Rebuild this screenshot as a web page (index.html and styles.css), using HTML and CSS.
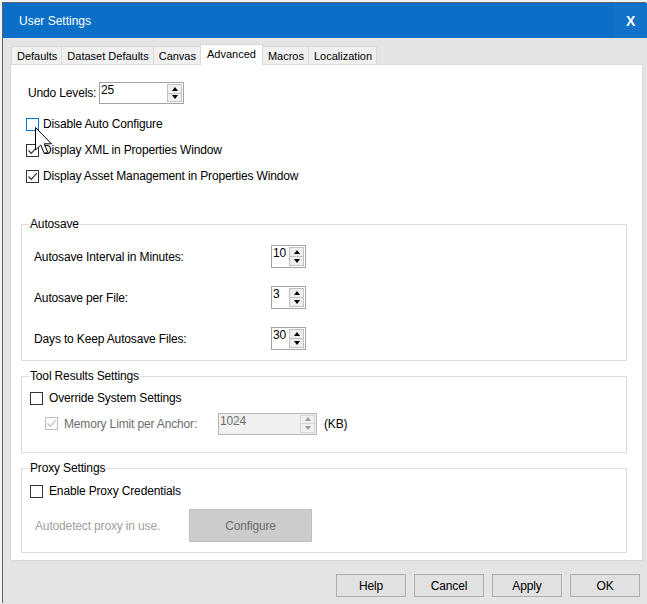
FILE: index.html
```html
<!DOCTYPE html>
<html>
<head>
<meta charset="utf-8">
<link rel="stylesheet" href="styles.css">
</head>
<body>
<div class="desk">
  <div class="window">
    <div class="titlebar">
      <span class="title">User Settings</span>
      <span class="close">X</span>
    </div>
    <div class="client">
      <div class="tabs">
        <div class="tab">Defaults</div>
        <div class="tab">Dataset Defaults</div>
        <div class="tab">Canvas</div>
        <div class="tab active">Advanced</div>
        <div class="tab">Macros</div>
        <div class="tab">Localization</div>
      </div>
      <div class="panel">
        <div class="undo-row">
          <span class="undo-label">Undo Levels:</span>
          <div class="spin spin-undo">
            <span class="val">25</span>
            <div class="arrows"><span class="up"></span><span class="dn"></span></div>
          </div>
        </div>
        <div class="checks">
          <div class="chk-row"><span class="cb hover"></span><span>Disable Auto Configure</span></div>
          <div class="chk-row"><span class="cb"><svg viewBox="0 0 11 11" width="11" height="11"><path d="M1.5 5.5 L4.3 8.3 L9.8 2.2" fill="none" stroke="#333" stroke-width="1.2"/></svg></span><span>Display XML in Properties Window</span></div>
          <div class="chk-row"><span class="cb"><svg viewBox="0 0 11 11" width="11" height="11"><path d="M1.5 5.5 L4.3 8.3 L9.8 2.2" fill="none" stroke="#333" stroke-width="1.2"/></svg></span><span>Display Asset Management in Properties Window</span></div>
        </div>

        <fieldset class="group autosave">
          <legend>Autosave</legend>
          <div class="as-grid">
            <span class="as-label">Autosave Interval in Minutes:</span>
            <div class="spin spin-small"><span class="val">10</span><div class="arrows"><span class="up"></span><span class="dn"></span></div></div>
            <span class="as-label">Autosave per File:</span>
            <div class="spin spin-small"><span class="val">3</span><div class="arrows"><span class="up"></span><span class="dn"></span></div></div>
            <span class="as-label">Days to Keep Autosave Files:</span>
            <div class="spin spin-small"><span class="val">30</span><div class="arrows"><span class="up"></span><span class="dn"></span></div></div>
          </div>
        </fieldset>

        <fieldset class="group tools">
          <legend>Tool Results Settings</legend>
          <div class="chk-line"><span class="cb"></span><span>Override System Settings</span></div>
          <div class="mem-line">
            <span class="cb disabled"><svg viewBox="0 0 11 11" width="11" height="11"><path d="M1.5 5.5 L4.3 8.3 L9.8 2.2" fill="none" stroke="#bcbcbc" stroke-width="1.2"/></svg></span>
            <span class="mem-label">Memory Limit per Anchor:</span>
            <div class="spin spin-mem disabled"><span class="val">1024</span><div class="arrows"><span class="up"></span><span class="dn"></span></div></div>
            <span class="kb">(KB)</span>
          </div>
        </fieldset>

        <fieldset class="group proxy">
          <legend>Proxy Settings</legend>
          <div class="chk-line"><span class="cb"></span><span>Enable Proxy Credentials</span></div>
          <div class="proxy-line">
            <span class="auto-label">Autodetect proxy in use.</span>
            <div class="btn-config">Configure</div>
          </div>
        </fieldset>
      </div>
      <div class="buttons">
        <div class="btn">Help</div>
        <div class="btn">Cancel</div>
        <div class="btn">Apply</div>
        <div class="btn">OK</div>
      </div>
    </div>
  </div>
  <svg class="cursor" width="20" height="30" viewBox="0 0 20 30"><path d="M0.5 0.5 L0.5 23 L5.8 18 L9.3 26.5 L12.6 25.1 L9.2 16.8 L16.5 16.8 Z" fill="#fff" stroke="#000" stroke-width="1"/></svg>
</div>
</body>
</html>
```

FILE: styles.css
```css
* { box-sizing: border-box; }
html, body { margin: 0; padding: 0; }
body {
  width: 647px;
  height: 604px;
  overflow: hidden;
  background: #f2f2f2;
  font-family: "Liberation Sans", Arial, sans-serif;
  font-size: 12px;
  letter-spacing: -0.15px;
  color: #000;
}
.desk {
  position: relative;
  height: 604px;
  padding: 3px 0 0 3px;
}
.window {
  width: 644px;
  height: 601px;
  display: flex;
  flex-direction: column;
  box-shadow: -1px -1px 0 #5e6673;
}
.titlebar {
  height: 35px;
  background: #0c6fc7;
  color: #fff;
  display: flex;
  align-items: center;
  justify-content: space-between;
  padding-left: 16px;
  padding-top: 1px;
}
.title { font-size: 12px; letter-spacing: 0; }
.close {
  width: 33px;
  height: 34px;
  display: flex;
  align-items: center;
  justify-content: center;
  font-weight: bold;
  font-size: 14px;
  background: #1072c9;
}
.client {
  flex: 1;
  background: #e4e4e4;
  padding: 6px 4px 0 7px;
  display: flex;
  flex-direction: column;
}
.tabs {
  display: flex;
  align-items: flex-end;
  height: 20px;
  margin-left: 1px;
  position: relative;
  z-index: 1;
}
.tab {
  height: 18px;
  padding: 0 4px 0 5px;
  background: #f0f0f0;
  border: 1px solid #d9d9d9;
  border-bottom: none;
  margin-right: -1px;
  font-size: 11px;
  letter-spacing: 0;
  display: flex;
  align-items: center;
  justify-content: center;
}
.tab.active {
  height: 21px;
  background: #fff;
  margin-bottom: -1px;
  padding: 0 6px 2px;
  position: relative;
  z-index: 2;
}
.panel {
  width: 633px;
  height: 497px;
  background: #fff;
  border: 1px solid #d9d9d9;
  padding: 17px 14px 0 10px;
  display: flex;
  flex-direction: column;
}
.undo-row {
  display: flex;
  align-items: center;
  height: 22px;
  padding-left: 7px;
}
.undo-label { width: 71px; }
.spin {
  display: flex;
  border: 1px solid #a3a3a3;
  background: #fff;
  height: 22px;
}
.spin .val {
  flex: 1;
  padding-left: 1px;
  line-height: 14px;
}
.spin .arrows {
  width: 16px;
  display: flex;
  flex-direction: column;
  padding: 1px 1px 1px 0;
}
.arrows span {
  flex: 1;
  border: 1px solid #c2c2c2;
  background: #efefef;
  display: flex;
  align-items: center;
  justify-content: center;
}
.arrows span + span { margin-top: -1px; }
.arrows .up::before {
  content: "";
  border-left: 3.5px solid transparent;
  border-right: 3.5px solid transparent;
  border-bottom: 4px solid #000;
}
.arrows .dn::before {
  content: "";
  border-left: 3.5px solid transparent;
  border-right: 3.5px solid transparent;
  border-top: 4px solid #000;
}
.spin-undo { width: 85px; }
.spin-small { width: 35px; height: 23px; }
.spin-mem { width: 99px; }
.spin.disabled { background: #f0f0f0; border-color: #b4b4b4; }
.spin.disabled .val { color: #6d6d6d; }
.spin.disabled .arrows span { background: #f0f0f0; border-color: #d4d4d4; }
.spin.disabled .arrows .up::before { border-bottom-color: #9a9a9a; }
.spin.disabled .arrows .dn::before { border-top-color: #9a9a9a; }

.checks {
  margin-top: 7px;
  display: flex;
  flex-direction: column;
  padding-left: 5px;
}
.chk-row {
  height: 26px;
  display: flex;
  align-items: center;
  gap: 4px;
}
.cb {
  width: 13px;
  height: 13px;
  border: 1px solid #333;
  background: #fff;
  display: inline-flex;
  align-items: center;
  justify-content: center;
  flex: none;
}
.cb.hover { border-color: #0078d7; }
.cb.disabled { border-color: #bcbcbc; }

.group {
  margin: 0;
  padding: 0;
  border: 1px solid #dcdcdc;
  width: 606px;
  min-width: 0;
}
.group legend {
  padding: 0 1px;
  margin-left: 7px;
  line-height: 14px;
  font-size: 12px;
}
.autosave { margin-top: 28px; padding: 14px 0 10px 0; }
.as-grid {
  display: grid;
  grid-template-columns: 237px 35px;
  row-gap: 18px;
  align-items: center;
  padding-left: 12px;
}
.tools { margin-top: 8px; padding: 4px 0 17px 0; }
.proxy { margin-top: 8px; padding: 5px 0 10px 0; }
.chk-line {
  height: 22px;
  display: flex;
  align-items: center;
  gap: 6px;
  padding-left: 8px;
}
.mem-line {
  margin-top: 3px;
  height: 23px;
  display: flex;
  align-items: center;
  padding-left: 23px;
}
.mem-line .cb { margin-right: 6px; }
.mem-label { width: 154px; color: #6d6d6d; }
.kb { margin-left: 7px; }
.proxy-line {
  margin-top: 7px;
  display: flex;
  align-items: center;
  padding-left: 13px;
}
.auto-label { width: 154px; color: #a0a0a0; }
.btn-config {
  width: 123px;
  height: 33px;
  background: #cccccc;
  border: 1px solid #bfbfbf;
  color: #6d6d6d;
  display: flex;
  align-items: center;
  justify-content: center;
}
.buttons {
  margin-top: 13px;
  display: flex;
  justify-content: flex-end;
  gap: 8px;
  padding-right: 3px;
}
.btn {
  width: 70px;
  height: 23px;
  background: #e1e1e1;
  border: 1px solid #adadad;
  display: flex;
  align-items: center;
  justify-content: center;
}
.cursor {
  position: absolute;
  left: 35px;
  top: 127px;
}
```
